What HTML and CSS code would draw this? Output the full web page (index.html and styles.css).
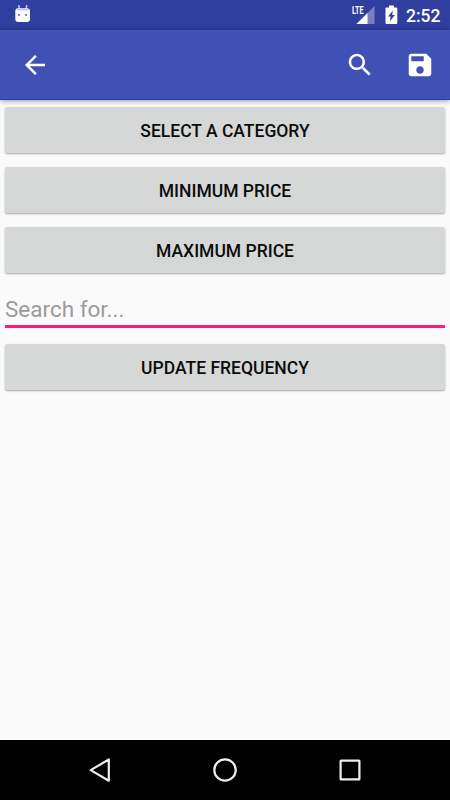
FILE: index.html
```html
<!DOCTYPE html>
<html lang="en">
<head>
<meta charset="utf-8">
<title>Search filter</title>
<link rel="stylesheet" href="styles.css">
</head>
<body>
<div class="screen">
  <header class="status">
    <svg class="status-bot" width="16" height="20" viewBox="0 0 16 20">
      <path d="M3.700 0L4.600 4M11.900 0L11 4" stroke="#c5cae9" stroke-width="1.400" fill="none"/>
      <path d="M.3 6Q.3 3.400 3 3.200h9.500q2.500.2 2.500 2.800v8q0 3-3 3H3.300q-3 0-3-3z" fill="#fff"/>
      <path d="M1.600 4.200Q7.700 2.500 13.900 4.200L13 5.500H2.500z" fill="#c5cae9"/>
      <path d="M3 9h2v2H3zM10 9h2v2h-2z" fill="#7c86c4"/>
    </svg>
    <div class="status-right">
      <svg class="signal" width="24" height="20" viewBox="0 0 24 20">
        <path d="M22.500 1v18h-18z" fill="#7781c2"/>
        <path d="M15.500 8v11h-11z" fill="#fff"/>
        <text class="lte" x="0" y="9" textLength="11.500" lengthAdjust="spacingAndGlyphs">LTE</text>
      </svg>
      <svg class="battery" width="13" height="20" viewBox="0 0 13 20">
        <path d="M4 .5h5v2h2.200q1.100 0 1.100 1.100v14.300q0 1.100-1.100 1.100H1.600Q.5 19 .5 17.900V3.600Q.5 2.500 1.600 2.500H4z" fill="#fff"/>
        <path d="M7.900 5.500L3 11.600h2.600L4.900 16.200l5-6.200H7.200z" fill="#303f9f"/>
      </svg>
      <span class="clock">2:52</span>
    </div>
  </header>
  <nav class="toolbar">
    <svg class="icon back" viewBox="0 0 24 24"><path d="M20 11H7.830l5.590-5.590L12 4l-8 8 8 8 1.410-1.410L7.830 13H20v-2z"/></svg>
    <svg class="icon" viewBox="0 0 24 24"><path d="M15.500 14h-.79l-.28-.27C15.410 12.590 16 11.110 16 9.500 16 5.910 13.090 3 9.500 3S3 5.910 3 9.500 5.910 16 9.500 16c1.610 0 3.090-.59 4.230-1.570l.27.28v.79l5 4.990L20.490 19l-4.990-5zm-6 0C7.010 14 5 11.990 5 9.500S7.010 5 9.500 5 14 7.010 14 9.500 11.990 14 9.500 14z"/></svg>
    <svg class="icon" viewBox="0 0 24 24"><path d="M17 3H5c-1.110 0-2 .9-2 2v14c0 1.100.89 2 2 2h14c1.100 0 2-.9 2-2V7l-4-4zm-5 16c-1.660 0-3-1.340-3-3s1.340-3 3-3 3 1.340 3 3-1.340 3-3 3zm3-10H5V5h10v4z"/></svg>
  </nav>
  <main class="content">
    <button class="btn"><span>SELECT A CATEGORY</span></button>
    <button class="btn"><span>MINIMUM PRICE</span></button>
    <button class="btn"><span>MAXIMUM PRICE</span></button>
    <div class="field">Search for...</div>
    <button class="btn"><span>UPDATE FREQUENCY</span></button>
  </main>
  <footer class="navbar">
    <svg width="26" height="26" viewBox="0 0 26 26"><path d="M21.800 2.500v21.200L3.700 13.100z"/></svg>
    <svg width="26" height="26" viewBox="0 0 26 26"><circle cx="13" cy="13" r="10.700"/></svg>
    <svg width="26" height="26" viewBox="0 0 26 26"><rect x="3.600" y="3.600" width="18.800" height="18.800" rx=".5"/></svg>
  </footer>
</div>
</body>
</html>
```

FILE: styles.css
```css
* { box-sizing: border-box; }
body {
  margin: 0;
  font-family: Roboto, sans-serif;
  background: #fafafa;
}
.screen {
  width: 450px;
  height: 800px;
  display: flex;
  flex-direction: column;
  overflow: hidden;
}
.status {
  height: 30px;
  flex: none;
  background: #303f9f;
  display: flex;
  justify-content: space-between;
  align-items: flex-start;
  padding: 5px 9px 0 15px;
}
.status-right { display: flex; }
.signal { margin-right: 9px; }
.battery { margin-right: 8px; }
.lte { font: 700 11px Roboto, sans-serif; fill: #fff; }
.clock {
  width: 35px;
  color: #fff;
  font-size: 17.500px;
  font-weight: 500;
  line-height: 22px;
  white-space: nowrap;
}
.toolbar {
  height: 70px;
  flex: none;
  background: #3f51b5;
  border-bottom: 1px solid #2440a8;
  box-shadow: 0 1px 5px rgba(0, 0, 0, .4);
  display: flex;
  align-items: center;
  gap: 30px;
  padding: 1px 15px 0 20px;
}
.icon { width: 30px; height: 30px; fill: #fff; }
.back { margin-right: auto; }
.content {
  flex: 1;
  padding: 7px 5px 0;
  display: flex;
  flex-direction: column;
}
.btn {
  height: 46px;
  flex: none;
  margin: 0 0 14px;
  padding: 2px 0 0;
  border: 0;
  border-radius: 2.500px;
  background: #d6d8d7;
  box-shadow: 0 1px 2px rgba(0, 0, 0, .35);
  font: 500 17.500px/21px Roboto, sans-serif;
  color: #0c0c0c;
}
.field {
  height: 41px;
  margin-bottom: 16px;
  border-bottom: 3px solid #ff1a7d;
  font-size: 22.500px;
  line-height: 45px;
  color: #9b9b9b;
}
.navbar {
  height: 60px;
  flex: none;
  background: #000;
  display: flex;
  justify-content: center;
  align-items: center;
  gap: 99px;
}
.navbar svg { fill: none; stroke: #eee; stroke-width: 2.200; stroke-linejoin: round; }
```
